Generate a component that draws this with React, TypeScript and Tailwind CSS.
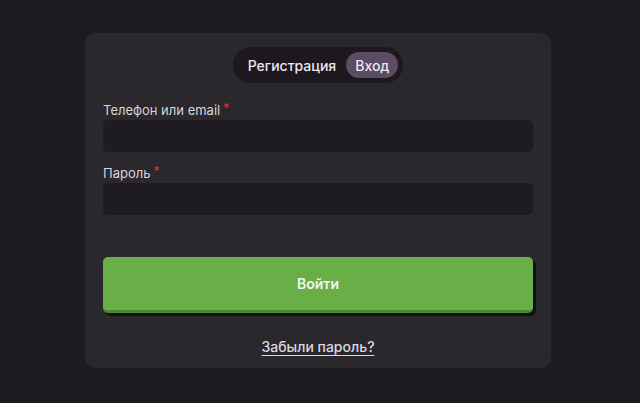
import { useState } from "react";

export default function App() {
    const [mode, setMode] = useState<string>("login");
    return (
        <div className="min-h-[403px] w-full bg-[#1e1b20] pt-[33px] font-['Inter',sans-serif]">
            <div className="ml-[85px] w-[466px] rounded-[10px] bg-[#2a272d] px-[18px] pt-[14px] pb-[11px]">
                <div className="flex justify-center">
                    <div className="flex h-[36px] items-center rounded-full bg-[#1c181e] p-[5px]">
                        <button
                            className={`h-[26px] rounded-full px-[10px] text-[14px] font-medium text-[#ece8ee] ${mode === "signup" ? "bg-[#5b4b63]" : ""}`}
                            onClick={() => setMode("signup")}
                        >Регистрация</button>
                        <button
                            className={`h-[26px] rounded-full px-[9px] text-[14px] font-medium text-[#ece8ee] ${mode === "login" ? "bg-[#5b4b63]" : ""}`}
                            onClick={() => setMode("login")}
                        >Вход</button>
                    </div>
                </div>
                <div className="mt-[18px] space-y-[12px]">
                    <div className="space-y-[1px]">
                        <p className="text-[13px] leading-[18px] text-[#d8d5da]">Телефон или email<span className="ml-[3px] align-top text-[12px] leading-[14px] text-[#d83a3a]">*</span></p>
                        <input type="text" className="block h-[32px] w-full rounded-[5px] bg-[#1f1c21] px-3 text-[14px] text-white outline-none" />
                    </div>
                    <div className="space-y-[1px]">
                        <p className="text-[13px] leading-[18px] text-[#d8d5da]">Пароль<span className="ml-[3px] align-top text-[12px] leading-[14px] text-[#d83a3a]">*</span></p>
                        <input type="password" className="block h-[32px] w-full rounded-[5px] bg-[#1f1c21] px-3 text-[14px] text-white outline-none" />
                    </div>
                </div>
                <button className="mt-[42px] block h-[56px] w-full rounded-[5px] border-b-[3px] border-[#4c8733] bg-[#6aae48] text-[14px] font-semibold text-[#f4f4f4] shadow-[3px_3px_0_#111013]">Войти</button>
                <div className="mt-[24px] flex justify-center">
                    <a href="#" className="text-[14px] font-medium leading-[20px] text-[#dcd9de] underline underline-offset-[3px]">Забыли пароль?</a>
                </div>
            </div>
        </div>
    );
}
